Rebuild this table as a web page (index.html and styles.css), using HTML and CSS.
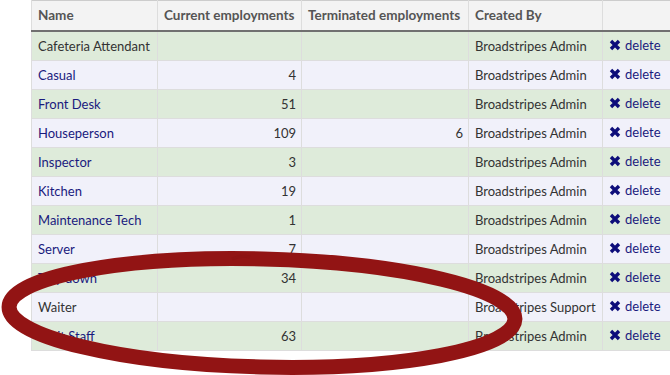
FILE: index.html
```html
<!DOCTYPE html>
<html>
<head>
<meta charset="utf-8">
<link rel="stylesheet" href="styles.css">
</head>
<body>
<div class="page">
<table class="grid">
  <colgroup>
    <col class="c-name"><col class="c-cur"><col class="c-term"><col class="c-by"><col class="c-act">
  </colgroup>
  <thead>
    <tr><th>Name</th><th>Current employments</th><th>Terminated employments</th><th>Created By</th><th></th></tr>
  </thead>
  <tbody>
    <tr class="g"><td class="plain">Cafeteria Attendant</td><td class="num"></td><td class="num"></td><td>Broadstripes Admin</td><td><a class="del"><svg class="x" viewBox="0 0 12 12"><path d="M2 2 L10 10 M10 2 L2 10"/></svg>delete</a></td></tr>
    <tr class="p"><td><a class="lnk">Casual</a></td><td class="num">4</td><td class="num"></td><td>Broadstripes Admin</td><td><a class="del"><svg class="x" viewBox="0 0 12 12"><path d="M2 2 L10 10 M10 2 L2 10"/></svg>delete</a></td></tr>
    <tr class="g"><td><a class="lnk">Front Desk</a></td><td class="num">51</td><td class="num"></td><td>Broadstripes Admin</td><td><a class="del"><svg class="x" viewBox="0 0 12 12"><path d="M2 2 L10 10 M10 2 L2 10"/></svg>delete</a></td></tr>
    <tr class="p"><td><a class="lnk">Houseperson</a></td><td class="num">109</td><td class="num">6</td><td>Broadstripes Admin</td><td><a class="del"><svg class="x" viewBox="0 0 12 12"><path d="M2 2 L10 10 M10 2 L2 10"/></svg>delete</a></td></tr>
    <tr class="g"><td><a class="lnk">Inspector</a></td><td class="num">3</td><td class="num"></td><td>Broadstripes Admin</td><td><a class="del"><svg class="x" viewBox="0 0 12 12"><path d="M2 2 L10 10 M10 2 L2 10"/></svg>delete</a></td></tr>
    <tr class="p"><td><a class="lnk">Kitchen</a></td><td class="num">19</td><td class="num"></td><td>Broadstripes Admin</td><td><a class="del"><svg class="x" viewBox="0 0 12 12"><path d="M2 2 L10 10 M10 2 L2 10"/></svg>delete</a></td></tr>
    <tr class="g"><td><a class="lnk">Maintenance Tech</a></td><td class="num">1</td><td class="num"></td><td>Broadstripes Admin</td><td><a class="del"><svg class="x" viewBox="0 0 12 12"><path d="M2 2 L10 10 M10 2 L2 10"/></svg>delete</a></td></tr>
    <tr class="p"><td><a class="lnk">Server</a></td><td class="num">7</td><td class="num"></td><td>Broadstripes Admin</td><td><a class="del"><svg class="x" viewBox="0 0 12 12"><path d="M2 2 L10 10 M10 2 L2 10"/></svg>delete</a></td></tr>
    <tr class="g"><td><a class="lnk">Tray down</a></td><td class="num">34</td><td class="num"></td><td>Broadstripes Admin</td><td><a class="del"><svg class="x" viewBox="0 0 12 12"><path d="M2 2 L10 10 M10 2 L2 10"/></svg>delete</a></td></tr>
    <tr class="p"><td class="plain">Waiter</td><td class="num"></td><td class="num"></td><td>Broadstripes Support</td><td><a class="del"><svg class="x" viewBox="0 0 12 12"><path d="M2 2 L10 10 M10 2 L2 10"/></svg>delete</a></td></tr>
    <tr class="g"><td><a class="lnk">Wait Staff</a></td><td class="num">63</td><td class="num"></td><td>Broadstripes Admin</td><td><a class="del"><svg class="x" viewBox="0 0 12 12"><path d="M2 2 L10 10 M10 2 L2 10"/></svg>delete</a></td></tr>
  </tbody>
</table>
<svg class="circle" viewBox="0 0 670 375" width="670" height="375">
  <g transform="rotate(1.4 262 313)">
    <ellipse cx="262" cy="313" rx="253" ry="54" />
  </g>
  <path class="seam" d="M232 259 Q240 255 250 257" />
</svg>
</div>
</body>
</html>
```

FILE: styles.css
```css
html, body {
  margin: 0;
  padding: 0;
  overflow: hidden;
  background: #ffffff;
}

.page {
  position: relative;
  width: 670px;
  height: 375px;
  padding-left: 31px;
  box-sizing: border-box;
  font-family: Lato, "Open Sans", sans-serif;
  font-size: 13px;
  color: #333333;
}

.grid {
  border-collapse: collapse;
  table-layout: fixed;
  width: 660px;
  border: 1px solid #cccccc;
}

.c-name { width: 126px; }
.c-cur { width: 144px; }
.c-term { width: 167px; }
.c-by { width: 134px; }
.c-act { width: 89px; }

.grid th {
  background: #f3f3f3;
  color: #555555;
  font-weight: bold;
  font-size: 13.5px;
  text-align: left;
  height: 30px;
  padding: 0 6px;
  border: 1px solid #dddddd;
  border-top: 0;
  border-bottom: 2px solid #707070;
  box-sizing: border-box;
  white-space: nowrap;
}

.grid td {
  height: 28px;
  padding: 0 6px;
  border: 1px solid #dddddd;
  white-space: nowrap;
  overflow: hidden;
}

.grid tr.g td { background: #deebda; }
.grid tr.p td { background: #f1f1fa; }

.grid td.num { text-align: right; padding-right: 5px; }

.lnk { color: #1a1a7e; text-decoration: none; }
.plain { color: #333333; }

.del {
  color: #1a1a7e;
  display: inline-flex;
  align-items: center;
  gap: 4px;
  text-decoration: none;
}

.x {
  width: 12px;
  height: 12px;
  stroke: #0d0d7a;
  stroke-width: 3.4;
  stroke-linecap: butt;
  fill: none;
}

.circle {
  position: absolute;
  left: 0;
  top: 0;
  pointer-events: none;
}

.circle ellipse {
  fill: none;
  stroke: #921414;
  stroke-width: 15;
}

.circle .seam {
  fill: none;
  stroke: #8a1212;
  stroke-width: 3;
  opacity: 0.5;
}
```
